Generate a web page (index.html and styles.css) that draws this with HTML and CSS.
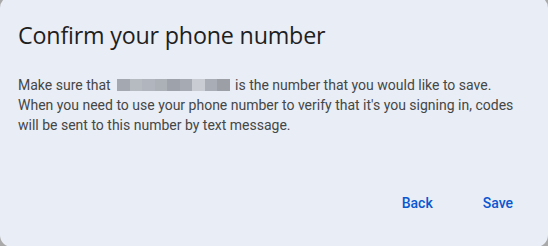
FILE: index.html
```html
<!DOCTYPE html>
<html lang="en">
<head>
    <meta charset="UTF-8">
    <title>Confirm your phone number</title>
    <link rel="stylesheet" href="styles.css">
</head>
<body>
    <div class="dialog">
        <h1 class="title">Confirm your phone number</h1>
        <p class="message">
            Make sure that <span class="blur"><i class="b1"></i><i class="b2"></i><i class="b3"></i><i class="b4"></i><i class="b5"></i><i class="b6"></i><i class="b7"></i><i class="b8"></i><i class="b9"></i></span> is the number that you would like to save.
            When you need to use your phone number to verify that it's you signing in, codes
            will be sent to this number by text message.
        </p>
        <div class="actions">
            <button class="text-button">Back</button>
            <button class="text-button">Save</button>
        </div>
    </div>
</body>
</html>
```

FILE: styles.css
```css
html, body {
    margin: 0;
    height: 100%;
    overflow: hidden;
}

body {
    background-color: #a9a9a9;
    font-family: Roboto, "Open Sans", sans-serif;
}

.dialog {
    margin-top: -4px;
    height: 251px;
    box-sizing: border-box;
    background-color: #e9edf6;
    border-radius: 12px;
    padding: 23px 23px 0 18px;
    display: flex;
    flex-direction: column;
}

.title {
    margin: 0;
    font-family: "Open Sans", Roboto, sans-serif;
    font-size: 23.3px;
    font-weight: 400;
    line-height: 32px;
    color: #1f1f1f;
    letter-spacing: -0.2px;
}

.message {
    margin: 24px 0 0;
    font-size: 14px;
    line-height: 20px;
    color: #444746;
}

.blur {
    display: inline-flex;
    vertical-align: -1px;
    height: 12px;
    margin: 0 2px 0 3px;
}

.blur i {
    display: block;
    width: 12.5px;
    height: 100%;
}

.b1 { background-color: #a4a8b0; }
.b2 { background-color: #b6bac1; }
.b3 { background-color: #b1b5bd; }
.b4 { background-color: #acb0b7; }
.b5 { background-color: #9ea2aa; }
.b6 { background-color: #a6aab2; }
.b7 { background-color: #c9ccd3; }
.b8 { background-color: #a9adb5; }
.b9 { background-color: #9c9fa6; }

.actions {
    margin-top: auto;
    margin-bottom: 26px;
    display: flex;
    justify-content: flex-end;
    gap: 26px;
}

.text-button {
    background: none;
    border: none;
    padding: 10px 12px;
    font-family: Roboto, sans-serif;
    font-size: 14px;
    font-weight: 500;
    color: #0b57d0;
    cursor: pointer;
}
```
